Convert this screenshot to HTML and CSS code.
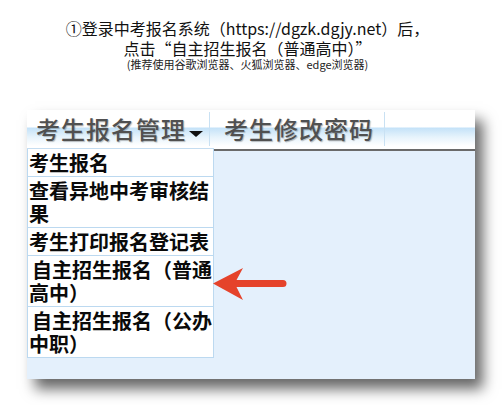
FILE: index.html
```html
<!DOCTYPE html>
<html lang="zh-CN">
<head>
<meta charset="utf-8">
<title>自主招生报名</title>
<link rel="stylesheet" href="styles.css">
</head>
<body>
<div class="caption">
  <div class="cap-line">①登录中考报名系统（https://dgzk.dgjy.net）后，</div>
  <div class="cap-line">点击“自主招生报名（普通高中）”</div>
  <div class="cap-note">(推荐使用谷歌浏览器、火狐浏览器、edge浏览器)</div>
</div>
<div class="shot">
  <div class="menubar">
    <div class="tab tab-first">考生报名管理<span class="caret"></span></div>
    <div class="tab tab-second">考生修改密码</div>
  </div>
  <div class="content"></div>
  <ul class="dropdown">
    <li class="item">考生报名</li>
    <li class="item">查看异地中考审核结果</li>
    <li class="item">考生打印报名登记表</li>
    <li class="item indent">自主招生报名（普通高中）</li>
    <li class="item indent">自主招生报名（公办中职）</li>
  </ul>
  <svg class="arrow" width="78" height="36" viewBox="0 0 78 36">
    <path d="M2 17.5 L32 2 L25.5 14 L72 14 A3.5 3.5 0 0 1 72 21 L25.5 21 L32 34 Z" fill="#e5432b"/>
  </svg>
</div>
</body>
</html>
```
FILE: styles.css
```css
html, body {
  margin: 0;
  padding: 0;
  background: #ffffff;
}
body {
  width: 503px;
  height: 405px;
  overflow: hidden;
  font-family: "Noto Sans CJK SC", "Noto Sans", sans-serif;
  color: #111;
}
.caption {
  padding-top: 18px;
  padding-right: 8px;
  text-align: center;
  height: 92px;
  box-sizing: border-box;
}
.cap-line {
  font-size: 16px;
  line-height: 20px;
  color: #111;
}
.cap-note {
  font-size: 11px;
  line-height: 13px;
  color: #222;
}
.shot {
  position: relative;
  margin-left: 27px;
  margin-top: 18px;
  width: 448px;
  height: 269px;
  background: #e4f0fc;
  box-shadow: 8px 10px 13px rgba(0, 0, 0, 0.6);
  display: flex;
  flex-direction: column;
}
.menubar {
  height: 39px;
  flex: none;
  display: flex;
  background: linear-gradient(to bottom, #ffffff 0, #ffffff 17px, #c4e2f8 18px, #e6f3fc 27px, #ffffff 36px, #ffffff 39px);
  border-bottom: 2px solid #6a6a6a;
}
.tab {
  font-size: 24px;
  line-height: 30px;
  letter-spacing: 1px;
  color: #505050;
  font-weight: 500;
  text-shadow: 1px 1px 1px rgba(0, 0, 0, 0.25);
  border-right: 1px solid #c9e1f3;
  margin-top: 2px;
  margin-bottom: 3px;
  display: flex;
  align-items: center;
}
.tab-first {
  width: 183px;
  padding-left: 9px;
  box-sizing: border-box;
}
.tab-second {
  width: 175px;
  padding-left: 14px;
  box-sizing: border-box;
}
.caret {
  width: 0;
  height: 0;
  margin-left: 3px;
  margin-top: 10px;
  border-left: 7px solid transparent;
  border-right: 7px solid transparent;
  border-top: 6px solid #111;
}
.content {
  flex: 1;
  background: #e4f0fc;
}
.dropdown {
  position: absolute;
  left: 0;
  top: 38px;
  width: 187px;
  margin: 0;
  padding: 0;
  list-style: none;
  border-top: 1px solid #c5ddf1;
}
.item {
  box-sizing: border-box;
  background: #ffffff;
  border: 1px solid #bcd9f0;
  border-top: none;
  padding: 2px 0 2px 1px;
  font-size: 20px;
  line-height: 23px;
  font-weight: 700;
  color: #0a0a0a;
}
.item.indent {
  text-indent: 3px;
}
.arrow {
  position: absolute;
  left: 184px;
  top: 156px;
}
```
